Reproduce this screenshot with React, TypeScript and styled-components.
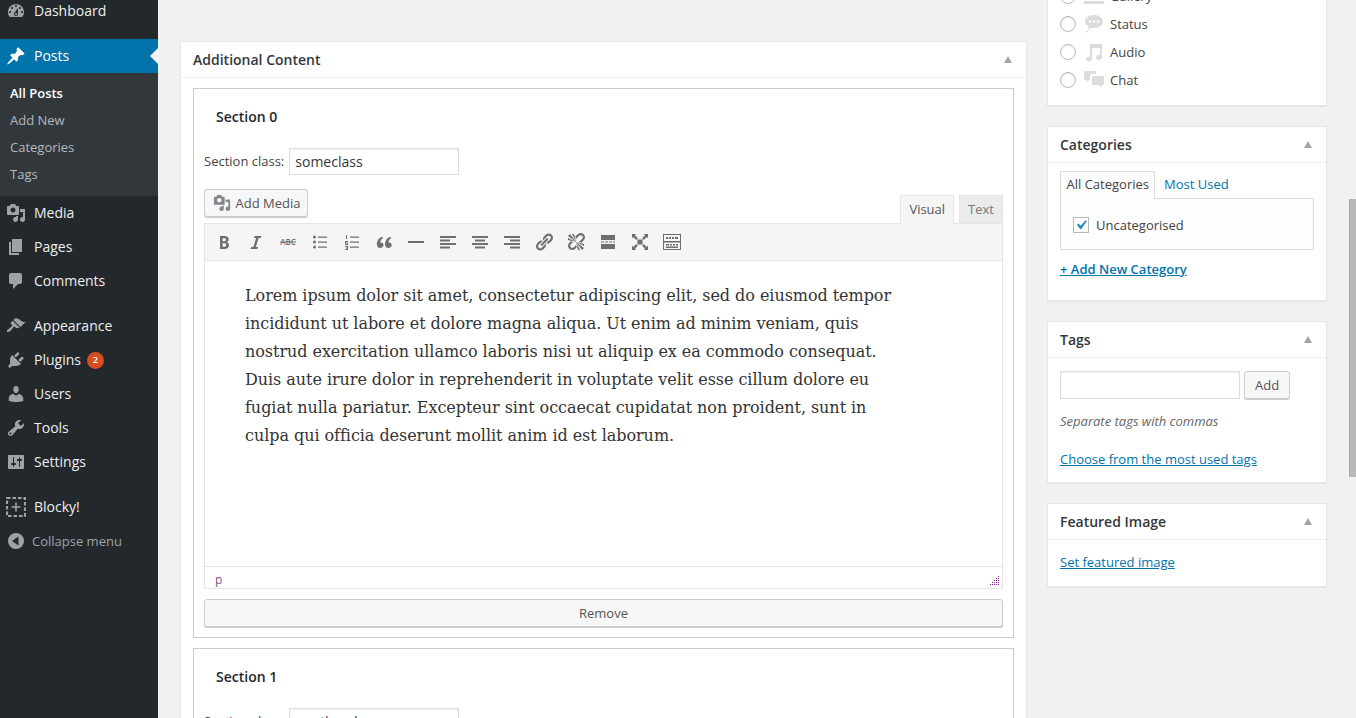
import React from "react";
import styled, { createGlobalStyle } from "styled-components";

const Global = createGlobalStyle`
  html, body { margin: 0; padding: 0; background: #f1f1f1; height: 100%; overflow: hidden; }
  body { font-family: "Open Sans", "Liberation Sans", sans-serif; font-size: 13px; color: #444; line-height: 1.4; }
  * { box-sizing: border-box; }
`;

const Page = styled.div`display: flex; height: 718px; overflow: hidden; background: #f1f1f1;`;
const Sidebar = styled.nav`width: 158px; flex: none; background: #23282d; display: flex; flex-direction: column; margin-top: -6px; height: 724px;`;
const MenuItem = styled.div<{ $active?: boolean; $gap?: boolean }>`
  position: relative; display: flex; align-items: center; height: 34px; flex: none; font-size: 14px; color: ${p => p.$active ? "#fff" : "#eee"};
  background: ${p => p.$active ? "#0073aa" : "transparent"}; margin-top: ${p => p.$gap ? "11px" : "0"};
  ${p => p.$active ? `&::after { content: ""; position: absolute; right: 0; top: 9px; border: 8px solid transparent; border-right-color: #f1f1f1; border-left: 0; }` : ""}
`;
const MenuIcon = styled.span<{ $active?: boolean }>`width: 34px; flex: none; display: flex; justify-content: center; align-items: center; color: ${p => p.$active ? "#fff" : "#9ea3a8"}; padding-right: 3px;`;
const SubMenu = styled.div`background: #32373c; padding: 7px 0 8px; display: flex; flex-direction: column;`;
const SubItem = styled.div<{ $current?: boolean }>`height: 27px; line-height: 27px; padding-left: 10px; font-size: 13px; color: ${p => p.$current ? "#fff" : "#b4b9be"}; font-weight: ${p => p.$current ? 600 : 400};`;
const Badge = styled.span`width: 17px; height: 17px; border-radius: 50%; background: #d54e21; color: #fff; font-size: 9px; font-weight: 600; display: flex; align-items: center; justify-content: center; margin-left: 6px;`;
const Collapse = styled.div`display: flex; align-items: center; height: 34px; color: #9ea3a8; font-size: 13px;`;
const CollapseIcon = styled.span`width: 32px; display: flex; justify-content: center; color: #9ea3a8; padding-right: 0;`;

const Content = styled.main`flex: 1; display: flex; align-items: flex-start; padding-left: 22px; min-width: 0;`;
const MainCol = styled.div`width: 847px; flex: none; margin-top: 41px;`;
const SideCol = styled.div`width: 280px; flex: none; margin-left: 20px; margin-top: -18px; display: flex; flex-direction: column; gap: 20px;`;
const Panel = styled.section`background: #fff; border: 1px solid #e5e5e5; box-shadow: 0 1px 1px rgba(0,0,0,.04);`;
const PanelHead = styled.header`height: 36px; border-bottom: 1px solid #eee; display: flex; align-items: center; justify-content: space-between; padding: 0 14px 0 12px; font-size: 14px; font-weight: 600; color: #32373c;`;
const Caret = styled.span`width: 0; height: 0; border-left: 4.5px solid transparent; border-right: 4.5px solid transparent; border-bottom: 7px solid #a0a5aa;`;
const PanelBody = styled.div`padding: 10px 12px 0;`;

const SectionBox = styled.div`border: 1px solid #ccc; padding: 0 10px 10px; background: #fff; & + & { margin-top: 10px; }`;
const SectionTitle = styled.h3`margin: 18px 0 0 12px; font-size: 14px; font-weight: 600; line-height: 20px; color: #23282d;`;
const ClassRow = styled.div`display: flex; align-items: center; margin-top: 21px; gap: 5px; height: 27px;`;
const TextInput = styled.div<{ $w: number; $h?: number }>`width: ${p => p.$w}px; height: ${p => p.$h || 27}px; border: 1px solid #ddd; background: #fff; padding: 0 5px; font-size: 14px; line-height: 25px; color: #32373c; box-shadow: inset 0 1px 2px rgba(0,0,0,.07);`;
const EditorTools = styled.div`display: flex; justify-content: space-between; align-items: flex-end; margin-top: 14px; height: 35px; position: relative; z-index: 1;`;
const Btn = styled.button<{ $w?: string }>`
  width: ${p => p.$w || "auto"}; height: 28px; border: 1px solid #ccc; border-radius: 3px; background: #f7f7f7; box-shadow: 0 1px 0 #ccc;
  color: #555; font: 13px "Open Sans", sans-serif; display: inline-flex; align-items: center; justify-content: center; gap: 4px; padding: 0 10px 1px;
`;
const MediaBtn = styled(Btn)`align-self: flex-start; width: 104px; gap: 5px; padding: 0 6px 1px 7px; svg { color: #82878c; }`;
const Tabs = styled.div`display: flex; gap: 5px; align-items: flex-end;`;
const Tab = styled.div<{ $on?: boolean }>`
  height: ${p => p.$on ? "29px" : "28px"}; border: 1px solid #e5e5e5; background: ${p => p.$on ? "#f5f5f5" : "#ebebeb"}; border-bottom: ${p => p.$on ? "0" : "1px solid #e5e5e5"};
  color: ${p => p.$on ? "#555" : "#777"}; padding: 0 8px; line-height: 27px; font-size: 13px; margin-bottom: ${p => p.$on ? "0" : "1px"};
`;
const Editor = styled.div`border: 1px solid #e5e5e5; background: #fff; margin-bottom: 10px; margin-top: -1px;`;
const Toolbar = styled.div`height: 37px; background: #f5f5f5; border-bottom: 1px solid #e5e5e5; display: flex; align-items: center; padding: 0 3px; color: #6f6f6f;`;
const ToolBtn = styled.span`width: 32px; height: 36px; display: flex; align-items: center; justify-content: center; flex: none;`;
const EditArea = styled.div`height: 305px; padding: 21px 40px 0; font-family: "DejaVu Serif", serif; font-size: 16px; letter-spacing: -0.05px; line-height: 28px; color: #333;`;
const EditLine = styled.div`white-space: nowrap;`;
const Status = styled.div`height: 22px; border-top: 1px solid #e5e5e5; padding-left: 10px; line-height: 26px; font-size: 12px; color: #72558a; display: flex; justify-content: space-between;`;
const Grip = styled.svg`align-self: flex-end; margin: 0 3px 3px 0;`;

const FormatRow = styled.div`display: flex; align-items: center; height: 28px; gap: 8px;`;
const Radio = styled.span`width: 16px; height: 16px; border: 1px solid #b4b9be; border-radius: 50%; background: #fff; box-shadow: inset 0 1px 2px rgba(0,0,0,.1); flex: none;`;
const FormatIcon = styled.span`width: 20px; height: 20px; color: #dcdcdc; flex: none; margin-right: -2px; display: flex;`;
const FormatList = styled.div`padding: 0 12px 11px; display: flex; flex-direction: column; margin-top: -1px;`;

const CatTabs = styled.div`display: flex; align-items: flex-end; height: 28px; margin-top: -3px;`;
const CatTab = styled.div<{ $on?: boolean }>`
  height: 28px; line-height: ${p => p.$on ? "24px" : "28px"}; padding: ${p => p.$on ? "0 5.500px" : "0 8.500px"}; font-size: 13px; color: ${p => p.$on ? "#444" : "#0073aa"};
  ${p => p.$on ? "border: 1px solid #ddd; border-bottom: 0; background: #fdfdfd; margin-bottom: -1px; position: relative; z-index: 1;" : ""}
`;
const CatBox = styled.div`height: 52px; width: 254px; border: 1px solid #ddd; background: #fdfdfd; display: flex; align-items: center; padding: 2px 0 0 12px; gap: 7px;`;
const Check = styled.span`width: 16px; height: 16px; border: 1px solid #b4b9be; background: #fff; display: flex; align-items: center; justify-content: center; color: #1e8cbe;`;
const A = styled.a<{ $strong?: boolean }>`color: #0073aa; text-decoration: underline; font-size: 13px; font-weight: ${p => p.$strong ? 600 : 400}; display: block;`;
const AddCatLink = styled(A)`margin-top: 10px; height: 40px;`;
const TagRow = styled.div`display: flex; gap: 4px; margin-top: 3px;`;
const Hint = styled.em`display: block; font-size: 13px; color: #666; margin-top: 13px;`;
const TagsLink = styled(A)`margin-top: 20px; height: 32px;`;
const FeatLink = styled(A)`margin-top: 3px; height: 33px;`;

const Scroll = styled.div`margin-left: auto; width: 7px; flex: none; align-self: stretch;`;
const Thumb = styled.div`margin-top: 199px; height: 278px; background: #b9b9b9; border-left: 1px solid #a8a8a8;`;

const I: React.FC<{ d: string; s?: number }> = ({ d, s = 20 }) => (
  <svg width={s} height={s} viewBox="0 0 20 20" fill="currentColor"><path fillRule="evenodd" d={d} /></svg>
);

const P = {
  dash: "M3.76 16h12.48c1.1-1.37 1.76-3.11 1.76-5 0-4.42-3.58-8-8-8s-8 3.58-8 8c0 1.89.66 3.63 1.76 5zM10 4c.55 0 1 .45 1 1s-.45 1-1 1-1-.45-1-1 .45-1 1-1zM6 6c.55 0 1 .45 1 1s-.45 1-1 1-1-.45-1-1 .45-1 1-1zm8 0c.55 0 1 .45 1 1s-.45 1-1 1-1-.45-1-1 .45-1 1-1zm-5.37 5.55L12 7v6c0 1.1-.9 2-2 2s-2-.9-2-2c0-.57.24-1.08.63-1.45zM4 10c.55 0 1 .45 1 1s-.45 1-1 1-1-.45-1-1 .45-1 1-1zm12 0c.55 0 1 .45 1 1s-.45 1-1 1-1-.45-1-1 .45-1 1-1zm-5 3c0-.55-.45-1-1-1s-1 .45-1 1 .45 1 1 1 1-.45 1-1z",
  post: "M10.44 3.02l1.82-1.82 6.36 6.35-1.83 1.82c-1.05-.68-2.48-.57-3.41.36l-.75.75c-.92.93-1.04 2.35-.35 3.41l-1.83 1.82-2.41-2.41-2.8 2.79c-.42.42-3.38 2.71-3.8 2.29s1.86-3.39 2.28-3.81l2.79-2.79L4.1 9.36l1.83-1.82c1.05.69 2.48.57 3.4-.36l.75-.75c.93-.92 1.05-2.35.36-3.41z",
  media: "M13 11V4c0-.55-.45-1-1-1h-1.67L9 1H5L3.67 3H2c-.55 0-1 .45-1 1v7c0 .55.45 1 1 1h10c.55 0 1-.45 1-1zM7 4.5c1.38 0 2.5 1.12 2.5 2.5S8.38 9.5 7 9.5 4.5 8.38 4.5 7 5.62 4.5 7 4.5zM14 6h5v10.5c0 1.38-1.12 2.5-2.5 2.5S14 17.88 14 16.5s1.12-2.5 2.5-2.5c.17 0 .34.02.5.05V9h-3V6zm-4 8.05V13h2v3.5c0 1.38-1.12 2.5-2.5 2.5S7 17.88 7 16.5 8.12 14 9.5 14c.17 0 .34.02.5.05z",
  page: "M6 15V2h10v13H6zm-1 1h8v2H3V5h2v11z",
  comments: "M5 2h9c1.1 0 2 .9 2 2v7c0 1.1-.9 2-2 2h-2l-5 5v-5H5c-1.1 0-2-.9-2-2V4c0-1.1.9-2 2-2z",
  appearance: "M14.48 11.06L7.41 3.99l1.5-1.5c.5-.56 2.3-.47 3.51.32 1.21.8 1.43 1.28 2.91 2.1 1.18.64 2.45 1.26 4.45.85zm-.71.71L6.7 4.7 4.93 6.47c-.39.39-.39 1.02 0 1.41l1.06 1.06c.39.39.39 1.03 0 1.42-.6.6-1.43 1.11-2.21 1.69-.35.26-.7.53-1.01.84C1.43 13.23.4 15.19 1.1 15.89s2.66-.33 3.99-1.66c.31-.31.58-.66.84-1.01.58-.78 1.09-1.61 1.69-2.21.39-.39 1.03-.39 1.42 0l1.06 1.06c.39.39 1.02.39 1.41 0z",
  plugins: "M13.11 4.36L9.87 7.6 8 5.73l3.24-3.24c.35-.34 1.05-.2 1.56.32.52.51.66 1.21.31 1.55zm-8 1.77l.91-1.12 9.01 9.01-1.19.84c-.71.71-2.63 1.16-3.82 1.16H6.14L4.9 17.26c-.59.59-1.54.59-2.12 0-.59-.58-.59-1.53 0-2.12l1.24-1.24v-3.88c0-1.13.4-3.19 1.09-3.89zm7.26 3.97l3.24-3.24c.34-.35 1.04-.21 1.55.31.52.51.66 1.21.31 1.55l-3.24 3.25z",
  users: "M10 9.25c-2.27 0-2.73-3.44-2.73-3.44C7 4.02 7.82 2 9.97 2c2.16 0 2.98 2.02 2.71 3.81 0 0-.41 3.44-2.68 3.44zm0 2.57L12.72 10c2.39 0 4.52 2.33 4.52 4.53v2.49s-3.65 1.13-7.24 1.13c-3.65 0-7.24-1.13-7.24-1.13v-2.49c0-2.25 1.94-4.48 4.47-4.48z",
  tools: "M16.68 9.77c-1.34 1.34-3.3 1.67-4.95.99l-5.41 6.52c-.99.99-2.59.99-3.58 0s-.99-2.59 0-3.57l6.52-5.42c-.68-1.65-.35-3.61.99-4.95 1.28-1.28 3.12-1.62 4.72-1.06l-2.89 2.89 2.82 2.82 2.86-2.87c.53 1.58.18 3.39-1.08 4.65zM3.81 16.21c.4.39 1.04.39 1.43 0 .4-.4.4-1.04 0-1.43-.39-.4-1.03-.4-1.43 0-.39.39-.39 1.03 0 1.43z",
  settings: "M18 16V4c0-.55-.45-1-1-1H3c-.55 0-1 .45-1 1v12c0 .55.45 1 1 1h14c.55 0 1-.45 1-1zM8 11h1c.55 0 1 .45 1 1s-.45 1-1 1H8v1.5c0 .28-.22.5-.5.5s-.5-.22-.5-.5V13H6c-.55 0-1-.45-1-1s.45-1 1-1h1V5.5c0-.28.22-.5.5-.5s.5.22.5.5V11zm5-2h-1c-.55 0-1-.45-1-1s.45-1 1-1h1V5.5c0-.28.22-.5.5-.5s.5.22.5.5V7h1c.55 0 1 .45 1 1s-.45 1-1 1h-1v5.5c0 .28-.22.5-.5.5s-.5-.22-.5-.5V9z",
  collapse: "M10 2a8 8 0 1 0 0 16 8 8 0 0 0 0-16zm2.5 3.5v9L6 10z",
  bold: "M6 4v13h4.54c1.37 0 2.46-.33 3.26-1 .8-.66 1.2-1.58 1.2-2.77 0-.84-.17-1.51-.51-2.01s-.9-.85-1.67-1.03v-.09c.57-.1 1.02-.4 1.36-.9s.51-1.13.51-1.91c0-1.14-.39-1.98-1.17-2.5C12.75 4.26 11.5 4 9.78 4H6zm2.57 5.15V6.26h1.36c.73 0 1.27.11 1.61.32.34.22.51.58.51 1.07 0 .54-.16.92-.47 1.15s-.82.35-1.51.35h-1.5zm0 2.19h1.6c1.44 0 2.16.53 2.16 1.61 0 .6-.17 1.05-.51 1.34s-.86.43-1.57.43H8.57v-3.38z",
  italic: "M14.78 6h-2.13l-2.8 9h2.12l-.62 2H4.6l.62-2h2.14l2.8-9H8.03l.62-2h6.75z",
  quote: "M9.49 13.22c0-.74-.2-1.38-.61-1.9-.62-.78-1.83-.88-2.53-.72-.29-1.65 1.11-3.75 2.92-4.65L7.88 4.7c-2.73 1.3-5.42 4.28-4.96 8.05C3.21 15.1 4.59 16 5.92 16c1.52 0 3.57-.9 3.57-2.78zm8.18 0c0-.74-.2-1.38-.61-1.9-.62-.78-1.83-.88-2.53-.72-.29-1.65 1.11-3.75 2.92-4.65L16.06 4.7c-2.73 1.3-5.42 4.28-4.96 8.05.29 2.35 1.67 3.25 3 3.25 1.52 0 3.57-.9 3.57-2.78z",
  hr: "M2 9h16v2H2z",
  left: "M2 4h16v2H2zm0 3.5h10v2H2zM2 11h16v2H2zm0 3.5h10v2H2z",
  center: "M2 4h16v2H2zm3 3.5h10v2H5zM2 11h16v2H2zm3 3.5h10v2H5z",
  right: "M2 4h16v2H2zm6 3.5h10v2H8zM2 11h16v2H2zm6 3.5h10v2H8z",
  link: "M17.74 2.76c1.68 1.69 1.68 4.41 0 6.1l-1.53 1.52c-1.12 1.12-2.7 1.47-4.14 1.09l2.62-2.61.76-.77.76-.76c.84-.84.84-2.2 0-3.04-.84-.85-2.2-.85-3.04 0l-.77.76-3.38 3.38c-.37-1.44-.02-3.02 1.1-4.14l1.52-1.53c1.69-1.68 4.42-1.68 6.1 0zM8.59 13.43l5.34-5.34c.42-.42.42-1.1 0-1.52-.44-.43-1.13-.39-1.53 0l-5.33 5.34c-.42.42-.42 1.1 0 1.52.44.43 1.13.39 1.52 0zm-.76 2.29l4.14-4.15c.38 1.44.03 3.02-1.09 4.14l-1.52 1.53c-1.69 1.68-4.41 1.68-6.1 0-1.68-1.68-1.68-4.42 0-6.1l1.53-1.52c1.12-1.12 2.7-1.47 4.14-1.1l-4.14 4.15c-.85.84-.85 2.2 0 3.05.84.84 2.2.84 3.04 0z",
  unlink: "M17.74 2.26c1.68 1.69 1.68 4.41 0 6.1l-1.53 1.52c-.32.33-.69.58-1.08.77L13 10l1.69-1.64.76-.77.76-.76c.84-.84.84-2.2 0-3.04-.84-.85-2.2-.85-3.04 0l-.77.76-.76.76L10 7l-.65-2.14c.19-.38.44-.75.77-1.07l1.52-1.53c1.69-1.68 4.42-1.68 6.1 0zM2 4l8 6-6-8zm4-2l4 8-2-8H6zM2 6l8 4-8-2V6zm7.36 7.69L10 13l.74 2.35-1.38 1.39c-1.69 1.68-4.41 1.68-6.1 0-1.68-1.68-1.68-4.42 0-6.1l1.39-1.38L7 10l-.69.64-1.52 1.53c-.85.84-.85 2.2 0 3.04.84.85 2.2.85 3.04 0zM18 16l-8-6 6 8zm-4 2l-4-8 2 8h2zm4-4l-8-4 8 2v2z",
  more: "M3 3h14v5H3zM3 9.500h3v1H3zm4 0h3v1H7zm4 0h3v1h-3zm4 0h2v1h-2zM3 12h14v5H3z",
  full: "M7.5 7.5h5v5h-5zM2 2h4.2L4.9 3.3l3 3L6.3 7.9l-3-3L2 6.2zm16 0v4.2l-1.3-1.3-3 3-1.6-1.6 3-3L13.8 2zM2 18v-4.2l1.3 1.3 3-3 1.6 1.6-3 3L6.2 18zm16 0h-4.2l1.3-1.3-3-3 1.6-1.6 3 3 1.3-1.3z",
  kitchen: "M1 2h18v16H1zm1 1v6h16V3zm0 7.500v6.500h16v-6.500zM4 5h2v2H4zm3 0h2v2H7zm3 0h2v2h-2zm3 0h3v2h-3zM4 12h3v1.500H4zm4 0h2v1.500H8zm3 0h2v1.500h-2zm3 0h2v1.500h-2zM4 14.500h12V16H4z",
  status: "M10 1c5 0 9 2.900 9 6.500S15 14 10 14c-1 0-2-.1-2.900-.3L4 16l.6-3.500C2.400 11.300 1 9.500 1 7.500 1 3.900 5 1 10 1zM6 6.200a1.300 1.300 0 1 0 0 2.600 1.300 1.300 0 0 0 0-2.600zm4 0a1.300 1.300 0 1 0 0 2.600 1.300 1.300 0 0 0 0-2.600zm4 0a1.300 1.300 0 1 0 0 2.600 1.300 1.300 0 0 0 0-2.600zM3 16.500a1 1 0 1 1 0 2 1 1 0 0 1 0-2z",
  audio: "M18 2v13.500c0 1.400-1.300 2.500-3 2.500s-3-1.100-3-2.500 1.300-2.500 3-2.500c.4 0 .7 0 1 .1V6H8v11c0 1.400-1.300 2.500-3 2.500S2 18.400 2 17s1.300-2.500 3-2.500c.4 0 .7 0 1 .1V2z",
  chat: "M1 1h10c.6 0 1 .4 1 1v2H8c-1.100 0-2 .9-2 2v4l-1 0-2.500 2.500V10H1c-.6 0-1-.4-1-1V2c0-.6.4-1 1-1zm8 5h10c.6 0 1 .4 1 1v7c0 .6-.4 1-1 1h-1.500v3L14.500 15H9c-.6 0-1-.4-1-1V7c0-.6.4-1 1-1z",
  gallery: "M3 1h14v2H3zM1 4h18v10H1zm-1 11h20v3H0z",
};

const Blocky = () => (
  <svg width="20" height="20" viewBox="0 0 20 20" fill="none" stroke="currentColor" strokeWidth="2.200">
    <rect x="1" y="1" width="18" height="18" strokeDasharray="3.500 2" />
    <path d="M10 5.500v9M5.500 10h9" strokeWidth="1.600" />
  </svg>
);

const Lists = {
  ul: (
    <svg width="20" height="20" viewBox="0 0 20 20" fill="currentColor">
      <circle cx="4.500" cy="5" r="1.500" /><circle cx="4.500" cy="10" r="1.500" /><circle cx="4.500" cy="15" r="1.500" />
      <path d="M8 4.500h9v1.200H8zM8 9.500h9v1.200H8zM8 14.500h9v1.200H8z" />
    </svg>
  ),
  ol: (
    <svg width="20" height="20" viewBox="0 0 20 20" fill="currentColor">
      <path d="M4 3h1v4H4zM3 9h3v1H4v.5h2V13H3v-1h2v-.5H3zM3 14h3v4H3v-1h2v-.5H4v-1h1V15H3zM8 4.500h9v1.200H8zM8 9.500h9v1.200H8zM8 14.500h9v1.200H8z" />
    </svg>
  ),
  abc: (
    <svg width="20" height="20" viewBox="0 0 20 20" fill="currentColor">
      <text x="10" y="12.500" textAnchor="middle" fontSize="8" fontFamily="Open Sans, sans-serif" fontWeight="600">ABC</text>
      <path d="M2 9.500h16v1H2z" />
    </svg>
  ),
};

const lorem = [
  "Lorem ipsum dolor sit amet, consectetur adipiscing elit, sed do eiusmod tempor",
  "incididunt ut labore et dolore magna aliqua. Ut enim ad minim veniam, quis",
  "nostrud exercitation ullamco laboris nisi ut aliquip ex ea commodo consequat.",
  "Duis aute irure dolor in reprehenderit in voluptate velit esse cillum dolore eu",
  "fugiat nulla pariatur. Excepteur sint occaecat cupidatat non proident, sunt in",
  "culpa qui officia deserunt mollit anim id est laborum.",
];

const toolIcons: React.ReactNode[] = [
  <I d={P.bold} />, <I d={P.italic} />, Lists.abc, Lists.ul, Lists.ol, <I d={P.quote} />, <I d={P.hr} />,
  <I d={P.left} />, <I d={P.center} />, <I d={P.right} />, <I d={P.link} />, <I d={P.unlink} />, <I d={P.more} />, <I d={P.full} />, <I d={P.kitchen} />,
];

const menuA = [["Media", P.media], ["Pages", P.page], ["Comments", P.comments]];
const menuB = [["Users", P.users], ["Tools", P.tools], ["Settings", P.settings]];

const gripDots: [number, number][] = [];
for (let r = 0; r < 5; r++) for (let c = 4 - r; c < 5; c++) gripDots.push([c * 2, r * 2]);

export default function App() {
  return (
    <Page>
      <Global />
      <Sidebar>
        <MenuItem><MenuIcon><I d={P.dash} /></MenuIcon>Dashboard</MenuItem>
        <MenuItem $active $gap><MenuIcon $active><I d={P.post} /></MenuIcon>Posts</MenuItem>
        <SubMenu>
          <SubItem $current>All Posts</SubItem>
          <SubItem>Add New</SubItem>
          <SubItem>Categories</SubItem>
          <SubItem>Tags</SubItem>
        </SubMenu>
        {menuA.map(([t, d]) => <MenuItem key={t}><MenuIcon><I d={d} /></MenuIcon>{t}</MenuItem>)}
        <MenuItem $gap><MenuIcon><I d={P.appearance} /></MenuIcon>Appearance</MenuItem>
        <MenuItem><MenuIcon><I d={P.plugins} /></MenuIcon>Plugins<Badge>2</Badge></MenuItem>
        {menuB.map(([t, d]) => <MenuItem key={t}><MenuIcon><I d={d} /></MenuIcon>{t}</MenuItem>)}
        <MenuItem $gap><MenuIcon><Blocky /></MenuIcon>Blocky!</MenuItem>
        <Collapse><CollapseIcon><I d={P.collapse} /></CollapseIcon>Collapse menu</Collapse>
      </Sidebar>
      <Content>
        <MainCol>
          <Panel>
            <PanelHead>Additional Content<Caret /></PanelHead>
            <PanelBody>
              <SectionBox>
                <SectionTitle>Section 0</SectionTitle>
                <ClassRow>Section class:<TextInput $w={170}>someclass</TextInput></ClassRow>
                <EditorTools>
                  <MediaBtn><I d={P.media} s={18} />Add Media</MediaBtn>
                  <Tabs><Tab $on>Visual</Tab><Tab>Text</Tab></Tabs>
                </EditorTools>
                <Editor>
                  <Toolbar>{toolIcons.map((ic, i) => <ToolBtn key={i}>{ic}</ToolBtn>)}</Toolbar>
                  <EditArea>{lorem.map(l => <EditLine key={l}>{l}</EditLine>)}</EditArea>
                  <Status>p
                    <Grip width="9" height="9" viewBox="0 0 9 9" fill="#8e2a9e" shapeRendering="crispEdges">
                      {gripDots.map(([x, y]) => <rect key={`${x}-${y}`} x={x} y={y} width="1" height="1" />)}
                    </Grip>
                  </Status>
                </Editor>
                <Btn $w="100%">Remove</Btn>
              </SectionBox>
              <SectionBox>
                <SectionTitle>Section 1</SectionTitle>
                <ClassRow>Section class:<TextInput $w={170}>anotherclass</TextInput></ClassRow>
              </SectionBox>
            </PanelBody>
          </Panel>
        </MainCol>
        <SideCol>
          <Panel>
            <FormatList>
              {[["Gallery", P.gallery], ["Status", P.status], ["Audio", P.audio], ["Chat", P.chat]].map(([t, d]) => (
                <FormatRow key={t}><Radio /><FormatIcon><I d={d} /></FormatIcon>{t}</FormatRow>
              ))}
            </FormatList>
          </Panel>
          <Panel>
            <PanelHead>Categories<Caret /></PanelHead>
            <PanelBody>
              <CatTabs><CatTab $on>All Categories</CatTab><CatTab>Most Used</CatTab></CatTabs>
              <CatBox>
                <Check>
                  <svg width="14" height="14" viewBox="0 0 20 20" fill="currentColor"><path d="M14.830 4.890l1.340.940-5.810 8.380H9.020L5.780 9.670l1.340-1.250 2.570 2.400z" transform="translate(-3.500 -3.500) scale(1.350)" /></svg>
                </Check>
                Uncategorised
              </CatBox>
              <AddCatLink $strong>+ Add New Category</AddCatLink>
            </PanelBody>
          </Panel>
          <Panel>
            <PanelHead>Tags<Caret /></PanelHead>
            <PanelBody>
              <TagRow><TextInput $w={180} $h={28} /><Btn>Add</Btn></TagRow>
              <Hint>Separate tags with commas</Hint>
              <TagsLink>Choose from the most used tags</TagsLink>
            </PanelBody>
          </Panel>
          <Panel>
            <PanelHead>Featured Image<Caret /></PanelHead>
            <PanelBody>
              <FeatLink>Set featured image</FeatLink>
            </PanelBody>
          </Panel>
        </SideCol>
        <Scroll><Thumb /></Scroll>
      </Content>
    </Page>
  );
}
